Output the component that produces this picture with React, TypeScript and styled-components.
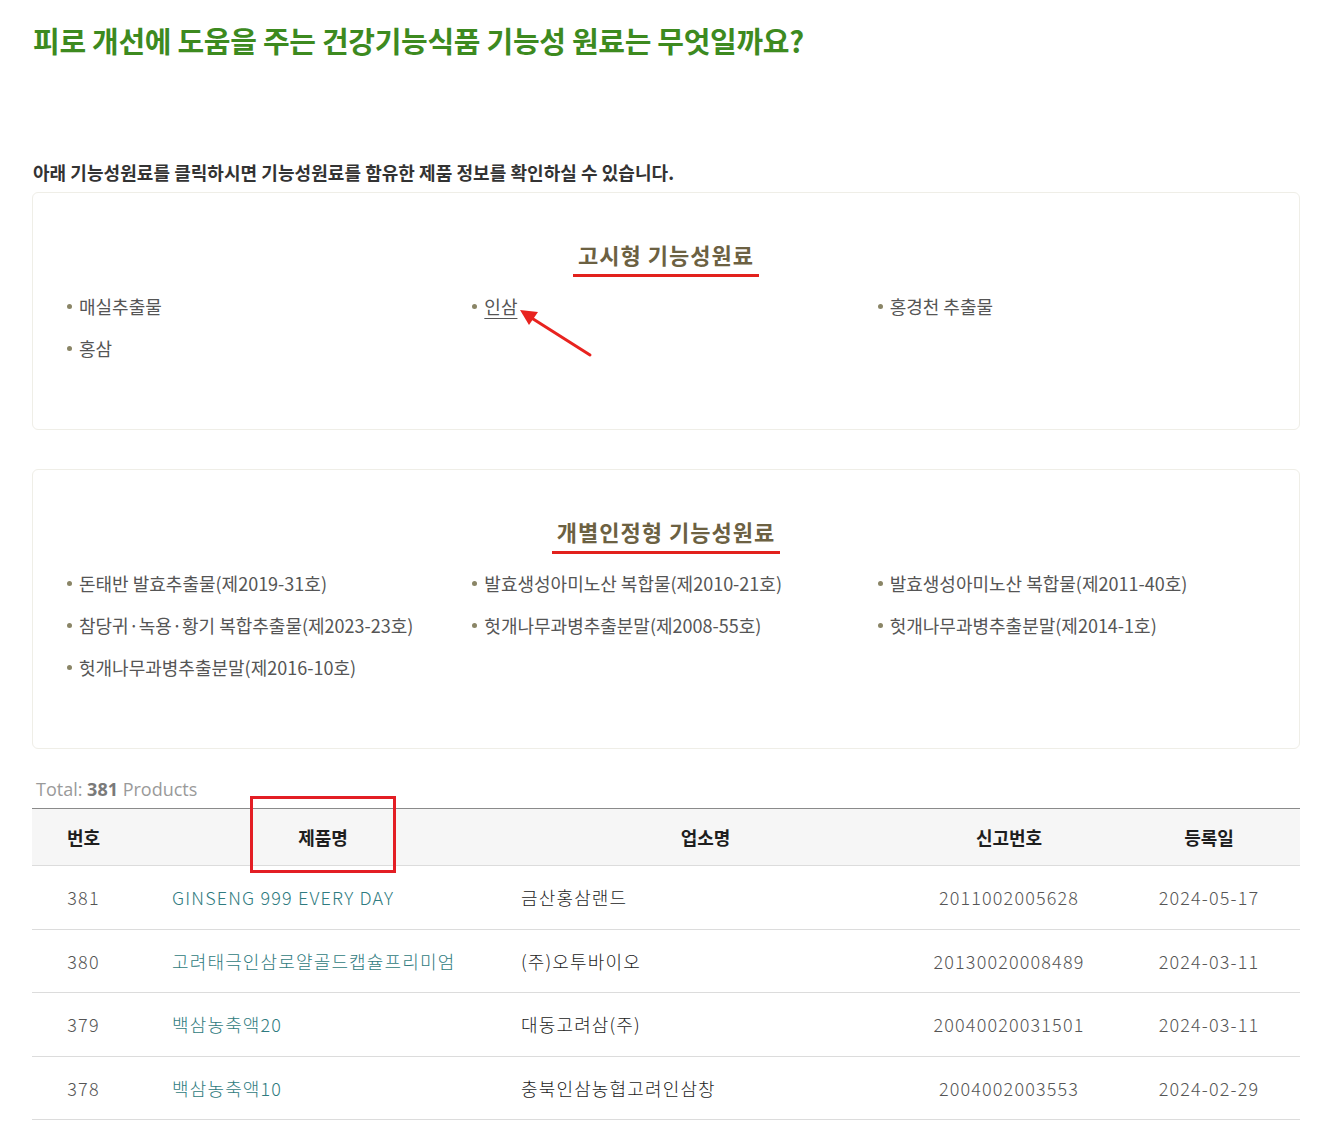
import styled, { createGlobalStyle } from "styled-components"

const GlobalStyle = createGlobalStyle`
  html, body {
    margin: 0;
    padding: 0;
    background: #fff;
  }
  body {
    font-family: "Noto Sans CJK KR", "Noto Sans", sans-serif;
    color: #333;
  }
  * {
    box-sizing: border-box;
  }
`

const Page = styled.div`
  width: 1342px;
  padding: 18px 42px 20px 32px;
`

const Title = styled.h1`
  margin: 0;
  font-size: 29px;
  line-height: 44px;
  font-weight: 700;
  letter-spacing: -0.3px;
  color: #3d8a1f;
  padding-left: 1px;
`

const Lead = styled.p`
  margin: 97px 0 7px;
  font-size: 18px;
  line-height: 26px;
  font-weight: 700;
  letter-spacing: 0.05px;
  color: #333;
  padding-left: 1px;
`

const Box = styled.section<{ $gap?: number }>`
  border: 1px solid #efeee7;
  border-radius: 6px;
  padding: 48px 0 68px;
  margin-bottom: ${(p) => p.$gap ?? 0}px;
`

const HeadingWrap = styled.div`
  text-align: center;
  margin-bottom: 16px;
`

const Heading = styled.h2`
  display: inline-block;
  margin: 0;
  padding: 0 5px 7px 5px;
  font-size: 22px;
  line-height: 26px;
  font-weight: 700;
  letter-spacing: 1px;
  color: #6c6142;
  border-bottom: 3px solid #e2211d;
`

const List = styled.ul`
  list-style: none;
  margin: 0;
  padding: 0 17px 0 33px;
  display: grid;
  grid-template-columns: repeat(3, 1fr);
  row-gap: 16px;
`

const Item = styled.li<{ $active?: boolean }>`
  position: relative;
  font-size: 18px;
  line-height: 26px;
  font-weight: 400;
  letter-spacing: 0;
  color: #555;
  padding-left: 13px;

  &::before {
    content: "";
    position: absolute;
    left: 1px;
    top: 11px;
    width: 5px;
    height: 5px;
    border-radius: 50%;
    background: #8a8566;
  }

  span {
    text-decoration: ${(p) => (p.$active ? "underline" : "none")};
    text-underline-offset: 4px;
    text-decoration-thickness: 1px;
  }
`

const Arrow = styled.svg`
  position: absolute;
  left: 45px;
  top: 11px;
  overflow: visible;
`

const Total = styled.div`
  margin: 28px 0 7px 4px;
  font-family: "Open Sans", "Noto Sans", sans-serif;
  font-size: 18px;
  line-height: 24px;
  color: #9a9a9a;

  b {
    color: #7a7a7a;
    font-weight: 700;
  }
`

const Table = styled.table`
  width: 100%;
  border-collapse: collapse;
  table-layout: fixed;
  border-top: 1px solid #8a8a8a;
`

const Th = styled.th<{ $w: number }>`
  position: relative;
  width: ${(p) => p.$w}px;
  height: 57px;
  background: #f6f6f6;
  border-bottom: 1px solid #dcdcdc;
  font-size: 18px;
  font-weight: 700;
  color: #1e1e1e;
  text-align: center;
  padding: 0;
`

const RedBox = styled.div`
  position: absolute;
  left: 115px;
  top: -13px;
  width: 146px;
  height: 77px;
  border: 3px solid #e31e24;
  pointer-events: none;
`

const Td = styled.td<{ $align?: string; $color?: string; $pad?: number }>`
  height: 63.6px;
  border-bottom: 1px solid #dcdcdc;
  font-size: 18px;
  font-weight: 300;
  letter-spacing: 1.15px;
  text-align: ${(p) => p.$align ?? "center"};
  color: ${(p) => p.$color ?? "#555"};
  padding: 0 0 0 ${(p) => p.$pad ?? 0}px;
  white-space: nowrap;
`

const gosi = [
  { name: "매실추출물" },
  { name: "인삼", active: true },
  { name: "홍경천 추출물" },
  { name: "홍삼" },
]

const gaebyeol = [
  "돈태반 발효추출물(제2019-31호)",
  "발효생성아미노산 복합물(제2010-21호)",
  "발효생성아미노산 복합물(제2011-40호)",
  "참당귀·녹용·황기 복합추출물(제2023-23호)",
  "헛개나무과병추출분말(제2008-55호)",
  "헛개나무과병추출분말(제2014-1호)",
  "헛개나무과병추출분말(제2016-10호)",
]

const rows = [
  ["381", "GINSENG 999 EVERY DAY", "금산홍삼랜드", "2011002005628", "2024-05-17"],
  ["380", "고려태극인삼로얄골드캡슐프리미엄", "(주)오투바이오", "20130020008489", "2024-03-11"],
  ["379", "백삼농축액20", "대동고려삼(주)", "20040020031501", "2024-03-11"],
  ["378", "백삼농축액10", "충북인삼농협고려인삼창", "2004002003553", "2024-02-29"],
]

export default function App() {
  return (
    <>
      <GlobalStyle />
      <Page>
        <Title>피로 개선에 도움을 주는 건강기능식품 기능성 원료는 무엇일까요?</Title>
        <Lead>아래 기능성원료를 클릭하시면 기능성원료를 함유한 제품 정보를 확인하실 수 있습니다.</Lead>

        <Box $gap={39}>
          <HeadingWrap>
            <Heading>고시형 기능성원료</Heading>
          </HeadingWrap>
          <List>
            {gosi.map((g) => (
              <Item key={g.name} $active={g.active}>
                <span>{g.name}</span>
                {g.active && (
                  <Arrow width="80" height="60" viewBox="0 0 80 60">
                    <line x1="74" y1="51" x2="14" y2="13" stroke="#e8231f" strokeWidth="3" strokeLinecap="round" />
                    <polygon points="4,6 22,8 13,21" fill="#e8231f" />
                  </Arrow>
                )}
              </Item>
            ))}
          </List>
        </Box>

        <Box>
          <HeadingWrap>
            <Heading>개별인정형 기능성원료</Heading>
          </HeadingWrap>
          <List>
            {gaebyeol.map((g) => (
              <Item key={g}>
                <span>{g}</span>
              </Item>
            ))}
          </List>
        </Box>

        <Total>
          Total: <b>381</b> Products
        </Total>

        <Table>
          <thead>
            <tr>
              <Th $w={103}>번호</Th>
              <Th $w={376}>
                제품명
                <RedBox />
              </Th>
              <Th $w={389}>업소명</Th>
              <Th $w={218}>신고번호</Th>
              <Th $w={182}>등록일</Th>
            </tr>
          </thead>
          <tbody>
            {rows.map((r) => (
              <tr key={r[0]}>
                <Td>{r[0]}</Td>
                <Td $align="left" $pad={37} $color="#2f7b80">
                  {r[1]}
                </Td>
                <Td $align="left" $pad={10} $color="#222">
                  {r[2]}
                </Td>
                <Td>{r[3]}</Td>
                <Td>{r[4]}</Td>
              </tr>
            ))}
          </tbody>
        </Table>
      </Page>
    </>
  )
}
